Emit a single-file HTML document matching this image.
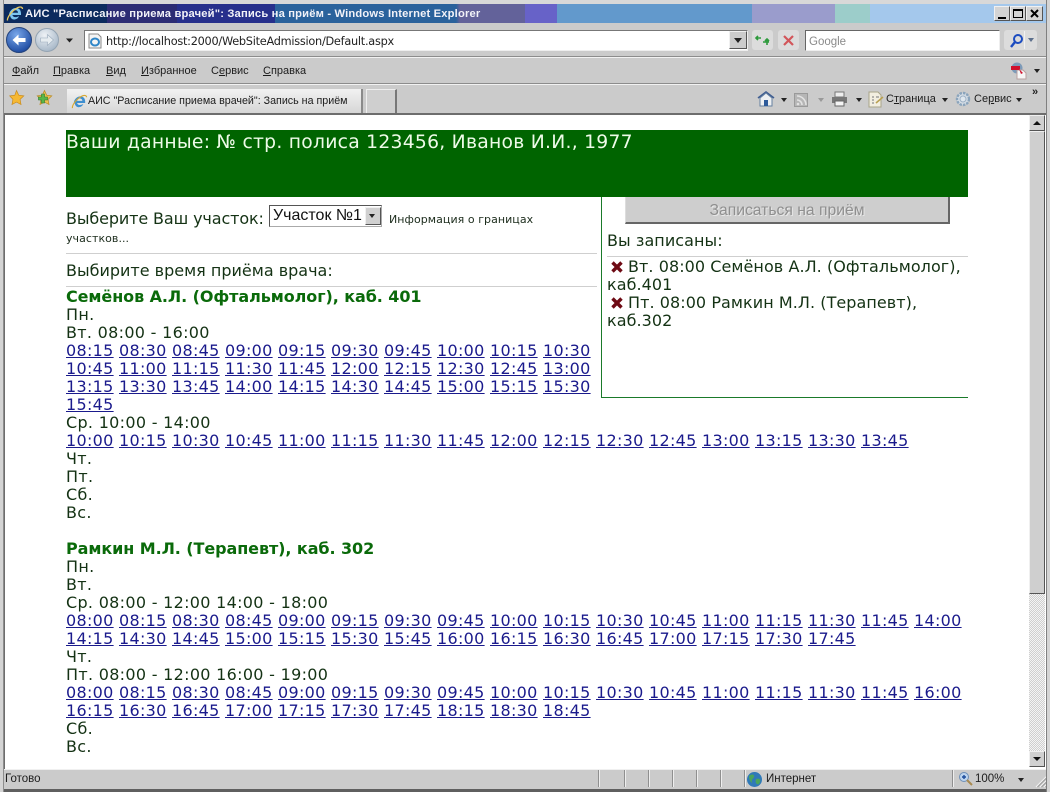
<!DOCTYPE html>
<html lang="ru"><head><meta charset="utf-8"><title>АИС</title>
<style>
html,body{margin:0;padding:0;width:1050px;height:792px;overflow:hidden;background:#cbcbcb}
body{position:relative;font-family:"Liberation Sans",sans-serif}
.a{position:absolute;white-space:nowrap}
.c{font-family:"Liberation Sans",sans-serif;font-size:11px;color:#1c1c1c;line-height:14px}
.d{font-family:"DejaVu Sans",sans-serif;font-size:11px;color:#1c2c1c;line-height:14px;letter-spacing:-.15px}
.v{font-family:"DejaVu Sans",sans-serif;font-size:16px;line-height:18px;letter-spacing:.3px;color:#143214}
.v a{color:#1a1a8c;text-decoration:underline}
.v b{color:#0a6a0a;font-weight:bold;letter-spacing:-.08px}
.t0{letter-spacing:0}
.t1{letter-spacing:.06px}
.ln{position:absolute;background:#cfcfcf;height:1px}
u{text-decoration:underline}
.btn{position:absolute;background:#d4d4d4;border:1px solid;border-color:#f0f0f0 #555 #555 #f0f0f0;box-sizing:border-box}
.sep{position:absolute;height:1px;background:#f2f2f2;left:0;width:1050px;border-top:1px solid #8c8c8c}
.tri{position:absolute;width:0;height:0;border-left:3.5px solid transparent;border-right:3.5px solid transparent;border-top:4px solid #222}
.st{position:absolute;top:770px;height:17px;width:1px;background:#8f8f8f;border-right:1px solid #eee}
</style></head><body>

<!-- title bar -->
<div class="a" style="left:0;top:0;width:1050px;height:4px;background:#d8d8d8"></div>
<div class="a" style="left:4px;top:4px;width:1042px;height:19px;background:linear-gradient(90deg,#0c2b5e 0,#0c2b5e 103px,#2c2c74 103px,#2c2c74 173px,#27308c 173px,#27308c 271px,#2a629c 271px,#2a629c 452px,#63629a 456px,#63629a 521px,#6762c8 521px,#6762c8 553px,#6299cc 553px,#6299cc 748px,#9a9ccc 748px,#9a9ccc 831px,#9ccdca 831px,#9ccdca 866px,#a4c8ec 866px)"></div>
<svg class="a" style="left:6px;top:5px" width="18" height="18" viewBox="0 0 18 18"><path d="M3 10.500C3 6 6.500 3 10 3c3 0 5 2.200 5 5.500v1.500H6.500c.2 2 3.500 3.200 6.500 1-.8 2.500-3 3.500-5 3.500-2 0-3.500-1.500-4-4zM6.500 7.800h5.500c0-1.500-1-2.500-2.700-2.500-1.500 0-2.600 1-2.800 2.500z" fill="#7cc4f0"/><path d="M1.500 15.500C1 13 5 6 12 2.500c2.500-1 4.500-.5 4.500 1.500" fill="none" stroke="#e8c860" stroke-width="1.300"/></svg>
<div class="a" style="left:25px;top:6px;font:bold 11.200px/16px 'Liberation Sans',sans-serif;color:#f2f2f8;letter-spacing:.17px">АИС "Расписание приема врачей": Запись на приём - Windows Internet Explorer</div>
<div class="btn" style="left:994px;top:6px;width:16px;height:15px"></div>
<div class="a" style="left:998px;top:17px;width:8px;height:2px;background:#000"></div>
<div class="btn" style="left:1010px;top:6px;width:16px;height:15px"></div>
<div class="a" style="left:1013px;top:9px;width:10px;height:9px;border:1px solid #000;border-top-width:2px;box-sizing:border-box"></div>
<div class="btn" style="left:1026px;top:6px;width:17px;height:15px"></div>
<svg class="a" style="left:1029px;top:8px" width="11" height="11"><path d="M2 2l7 7M9 2l-7 7" stroke="#000" stroke-width="2"/></svg>

<!-- address bar -->
<svg class="a" style="left:6px;top:26px" width="74" height="28" viewBox="0 0 74 28">
<defs><radialGradient id="bk" cx=".4" cy=".3" r=".8"><stop offset="0" stop-color="#7aa8ea"/><stop offset="1" stop-color="#123f98"/></radialGradient><radialGradient id="fw" cx=".4" cy=".3" r=".8"><stop offset="0" stop-color="#eef2f6"/><stop offset="1" stop-color="#9eb0c2"/></radialGradient></defs>
<circle cx="13" cy="14" r="12.500" fill="url(#bk)" stroke="#24437c"/>
<path d="M6.500 14l6-5.500v3.500h7v4h-7v3.500z" fill="#fff"/>
<circle cx="41" cy="14" r="11.500" fill="url(#fw)" stroke="#93a3b2"/>
<path d="M47.500 14l-6-5.500v3.500h-7v4h7v3.500z" fill="#e6ecf0" stroke="#9ab" stroke-width=".6"/>
<path d="M60 12.500h7l-3.500 4z" fill="#222"/></svg>
<div class="a" style="left:84px;top:30px;width:664px;height:21px;background:#fff;border:1px solid;border-color:#777 #eee #eee #777;box-sizing:border-box"></div>
<svg class="a" style="left:87px;top:33px" width="16" height="16"><path d="M2 1h9l3 3v11H2z" fill="#f4f4f4" stroke="#8a8a8a"/><ellipse cx="8" cy="9" rx="4" ry="3.500" fill="none" stroke="#2f86c8" stroke-width="2"/></svg>
<div class="a" style="left:106px;top:34px;font:11.300px/15px 'DejaVu Sans',sans-serif;color:#222;letter-spacing:-.26px">http://localhost:2000/WebSiteAdmission/Default.aspx</div>
<div class="btn" style="left:729px;top:31px;width:18px;height:18px;background:#ccc"></div>
<div class="tri" style="left:734px;top:38px;border-left-width:4px;border-right-width:4px;border-top-width:5px"></div>
<div class="a" style="left:752px;top:30px;width:21px;height:20px;background:#dcdcdc;border-radius:3px"></div>
<svg class="a" style="left:754px;top:32px" width="18" height="16"><path d="M2 6h5M4 4L2 6l2 2M9 10h6M13 8v5M11 9l2-2 2 2" fill="none" stroke="#2d9a3c" stroke-width="1.600"/></svg>
<div class="a" style="left:778px;top:30px;width:21px;height:20px;background:#dcdcdc;border-radius:3px"></div>
<svg class="a" style="left:782px;top:34px" width="13" height="13"><path d="M2 2l9 9M11 2l-9 9" stroke="#d2555a" stroke-width="2.200"/></svg>
<div class="a" style="left:805px;top:30px;width:195px;height:21px;background:#fff;border:1px solid;border-color:#666 #eee #eee #666;box-sizing:border-box"></div>
<div class="a" style="left:809px;top:35px;font:11.500px/15px 'Liberation Sans',sans-serif;color:#8a8a8a">Google</div>
<div class="a" style="left:1004px;top:30px;width:33px;height:20px;background:#dcdcdc;border-radius:3px"></div>
<svg class="a" style="left:1009px;top:33px" width="16" height="15"><circle cx="9" cy="6" r="4" fill="none" stroke="#1c4cc0" stroke-width="2"/><path d="M6 9l-4 5" stroke="#1c4cc0" stroke-width="2.400"/></svg>
<div class="a" style="left:1024px;top:31px;width:1px;height:18px;background:#f2f2f2"></div>
<div class="tri" style="left:1028px;top:38px;border-top-color:#5c6f8c"></div>

<div class="sep" style="top:56px"></div>
<!-- menu -->
<div class="a c" style="left:12px;top:64px"><u>Ф</u>айл</div>
<div class="a c" style="left:53px;top:64px"><u>П</u>равка</div>
<div class="a c" style="left:106px;top:64px"><u>В</u>ид</div>
<div class="a c" style="left:141px;top:64px"><u>И</u>збранное</div>
<div class="a c" style="left:211px;top:64px">С<u>е</u>рвис</div>
<div class="a c" style="left:263px;top:64px"><u>С</u>правка</div>
<svg class="a" style="left:1009px;top:62px" width="20" height="18"><circle cx="8" cy="6" r="5.500" fill="#7d9ab8"/><path d="M8 8h6l3 3v6H8z" fill="#f6f6f6" stroke="#b9a0a0"/><path d="M2 4h9v4H2zM10 7l2 5 2-1" fill="#d0102c"/></svg>
<div class="tri" style="left:1034px;top:69px"></div>
<div class="sep" style="top:83px"></div>

<!-- tab row -->
<svg class="a" style="left:8px;top:89px" width="46" height="18" viewBox="0 0 46 18">
<path d="M8.500 1.500l2.200 4.700 5.100.7-3.700 3.500.9 5.100-4.500-2.400-4.500 2.400.9-5.100L1.700 6.900l5.100-.7z" fill="#f6b832" stroke="#c88a1c" stroke-width=".7"/>
<path d="M36.500 1.500l2.200 4.700 5.100.7-3.700 3.500.9 5.100-4.500-2.400-4.500 2.400.9-5.100-3.700-3.500 5.100-.7z" fill="#eec050" stroke="#b88a20" stroke-width=".7"/>
<path d="M33.500 5h3v3h3v3h-3v3h-3v-3h-3V8h3z" fill="#58b848" stroke="#2e7a2e" stroke-width=".6"/></svg>
<div class="a" style="left:67px;top:89px;width:296px;height:24px;background:linear-gradient(#f2f2f2,#d6d6d6);border-right:2px solid #8a8a8a;box-sizing:border-box"></div>
<svg class="a" style="left:71px;top:93px" width="17" height="18" viewBox="0 0 18 18"><path d="M3 10.500C3 6 6.500 3 10 3c3 0 5 2.200 5 5.500v1.500H6.500c.2 2 3.500 3.200 6.500 1-.8 2.500-3 3.500-5 3.500-2 0-3.500-1.500-4-4zM6.500 7.800h5.500c0-1.500-1-2.500-2.700-2.500-1.500 0-2.600 1-2.800 2.500z" fill="#3f8fd0"/><path d="M1.500 15.500C1 13 5 6 12 2.500c2.500-1 4.500-.5 4.500 1.500" fill="none" stroke="#d8a830" stroke-width="1.200"/></svg>
<div class="a c" style="left:88px;top:94px;font-size:10.700px">АИС "Расписание приема врачей": Запись на приём</div>
<div class="a" style="left:366px;top:89px;width:28px;height:24px;border-top:1px solid #eee;border-left:1px solid #eee;border-right:2px solid #777;background:#cfcfcf"></div>
<svg class="a" style="left:757px;top:90px" width="18" height="18"><path d="M1 8l8-6 8 6" fill="none" stroke="#3e5c90" stroke-width="1.600"/><path d="M3 8v8h12V8L9 3z" fill="#eef0f2" stroke="#6680a0"/><path d="M7 10h4v6H7z" fill="#2d5a9a"/></svg>
<div class="tri" style="left:781px;top:98px"></div>
<div class="a" style="left:794px;top:93px;width:14px;height:14px;background:#b6b6b6;border:1px solid #9a9a9a;box-sizing:border-box"></div>
<svg class="a" style="left:796px;top:95px" width="11" height="11"><path d="M1 5a5 5 0 0 1 5 5M1 1a9 9 0 0 1 9 9" fill="none" stroke="#e2e2e2" stroke-width="1.600"/><circle cx="2" cy="9" r="1.300" fill="#e2e2e2"/></svg>
<div class="tri" style="left:818px;top:98px;border-top-color:#999"></div>
<svg class="a" style="left:831px;top:90px" width="18" height="18"><path d="M4 2h9v5H4z" fill="#eee" stroke="#777"/><path d="M1 7h15v6H1z" fill="#777"/><path d="M4 11h9v5H4z" fill="#f4f4f4" stroke="#666"/></svg>
<div class="tri" style="left:856px;top:98px"></div>
<svg class="a" style="left:867px;top:90px" width="18" height="18"><path d="M2 2h9l3 3v12H2z" fill="#f2eee0" stroke="#a8a488"/><path d="M5 7h2M5 10h2M5 13h2M9 7h3" stroke="#777"/><path d="M9 13l7-6" stroke="#b9a050" stroke-width="1.500"/></svg>
<div class="a c" style="left:886px;top:92px"><span>С</span><u>т</u>раница</div>
<div class="tri" style="left:942px;top:98px"></div>
<svg class="a" style="left:954px;top:90px" width="18" height="18"><circle cx="9" cy="9" r="6" fill="#d6dee6" stroke="#8aa4bc" stroke-width="2.400" stroke-dasharray="2.500 1"/><circle cx="9" cy="9" r="3" fill="#dfe7ee" stroke="#9cb0c4"/></svg>
<div class="a c" style="left:974px;top:92px">Се<u>р</u>вис</div>
<div class="tri" style="left:1016px;top:98px"></div>
<div class="a" style="left:1032px;top:85px;font:bold 11px/14px 'Liberation Sans',sans-serif;color:#222">»</div>

<!-- viewport -->
<div class="a" style="left:4px;top:113px;width:1042px;height:656px;background:#fff;border-top:2px solid #6d6d6d;border-left:1px solid #6d6d6d;box-sizing:border-box"></div>
<!-- scrollbar -->
<div class="a" style="left:1029px;top:115px;width:16px;height:652px;background:repeating-conic-gradient(#cfcfcf 0 25%,#f4f4f4 0 50%) 0 0/2px 2px"></div>
<div class="btn" style="left:1029px;top:115px;width:16px;height:16px;background:#d0d0d0"></div>
<div class="a" style="left:1033px;top:121px;width:0;height:0;border-left:4px solid transparent;border-right:4px solid transparent;border-bottom:4px solid #111"></div>
<div class="btn" style="left:1029px;top:131px;width:16px;height:463px;background:#cfcfcf"></div>
<div class="btn" style="left:1029px;top:751px;width:16px;height:16px;background:#d0d0d0"></div>
<div class="tri" style="left:1033px;top:757px;border-left-width:4px;border-right-width:4px;border-top-width:4px;border-top-color:#111"></div>

<!-- page content -->
<div class="a" style="left:66px;top:130px;width:902px;height:67px;background:#006400"></div>
<div class="a v" style="left:66px;top:132px;font-size:18.750px;line-height:22px;color:#eefbe8;letter-spacing:.25px">Ваши данные: № стр. полиса 123456, Иванов И.И., 1977</div>

<div class="a" style="left:601px;top:197px;width:1px;height:201px;background:#1a7a2a"></div>
<div class="a" style="left:601px;top:397px;width:367px;height:1px;background:#1a7a2a"></div>

<div class="a v t0" style="left:66px;top:210px;letter-spacing:-.12px">Выберите Ваш участок:</div>
<div class="a" style="left:269px;top:205px;width:113px;height:22px;border:1px solid;border-color:#555 #aaa #aaa #555;box-sizing:border-box;background:#fff;font:16px/20px 'Liberation Sans',sans-serif;color:#111;padding-left:3px">Участок №1</div>
<div class="btn" style="left:365px;top:207px;width:16px;height:18px;background:#d0d0d0"></div>
<div class="tri" style="left:369px;top:214px"></div>
<div class="a d" style="left:389px;top:213px;letter-spacing:.05px">Информация о границах</div>
<div class="a d" style="left:66px;top:232px;letter-spacing:.05px">участков...</div>
<div class="ln" style="left:66px;top:253px;width:531px"></div>
<div class="a v t0" style="left:66px;top:262px">Выбирите время приёма врача:</div>
<div class="ln" style="left:66px;top:286px;width:531px"></div>

<div class="a v" style="left:66px;top:288px"><b>Семёнов А.Л. (Офтальмолог), каб. 401</b><br>
Пн.<br>
Вт. 08:00 - 16:00<br>
<a>08:15</a> <a>08:30</a> <a>08:45</a> <a>09:00</a> <a>09:15</a> <a>09:30</a> <a>09:45</a> <a>10:00</a> <a>10:15</a> <a>10:30</a><br>
<a>10:45</a> <a>11:00</a> <a>11:15</a> <a>11:30</a> <a>11:45</a> <a>12:00</a> <a>12:15</a> <a>12:30</a> <a>12:45</a> <a>13:00</a><br>
<a>13:15</a> <a>13:30</a> <a>13:45</a> <a>14:00</a> <a>14:15</a> <a>14:30</a> <a>14:45</a> <a>15:00</a> <a>15:15</a> <a>15:30</a><br>
<a>15:45</a><br>
Ср. 10:00 - 14:00<br>
<a>10:00</a> <a>10:15</a> <a>10:30</a> <a>10:45</a> <a>11:00</a> <a>11:15</a> <a>11:30</a> <a>11:45</a> <a>12:00</a> <a>12:15</a> <a>12:30</a> <a>12:45</a> <a>13:00</a> <a>13:15</a> <a>13:30</a> <a>13:45</a><br>
Чт.<br>
Пт.<br>
Сб.<br>
Вс.<br>
<br>
<b>Рамкин М.Л. (Терапевт), каб. 302</b><br>
Пн.<br>
Вт.<br>
Ср. 08:00 - 12:00 14:00 - 18:00<br>
<a>08:00</a> <a>08:15</a> <a>08:30</a> <a>08:45</a> <a>09:00</a> <a>09:15</a> <a>09:30</a> <a>09:45</a> <a>10:00</a> <a>10:15</a> <a>10:30</a> <a>10:45</a> <a>11:00</a> <a>11:15</a> <a>11:30</a> <a>11:45</a> <a>14:00</a><br>
<a>14:15</a> <a>14:30</a> <a>14:45</a> <a>15:00</a> <a>15:15</a> <a>15:30</a> <a>15:45</a> <a>16:00</a> <a>16:15</a> <a>16:30</a> <a>16:45</a> <a>17:00</a> <a>17:15</a> <a>17:30</a> <a>17:45</a><br>
Чт.<br>
Пт. 08:00 - 12:00 16:00 - 19:00<br>
<a>08:00</a> <a>08:15</a> <a>08:30</a> <a>08:45</a> <a>09:00</a> <a>09:15</a> <a>09:30</a> <a>09:45</a> <a>10:00</a> <a>10:15</a> <a>10:30</a> <a>10:45</a> <a>11:00</a> <a>11:15</a> <a>11:30</a> <a>11:45</a> <a>16:00</a><br>
<a>16:15</a> <a>16:30</a> <a>16:45</a> <a>17:00</a> <a>17:15</a> <a>17:30</a> <a>17:45</a> <a>18:15</a> <a>18:30</a> <a>18:45</a><br>
Сб.<br>
Вс.</div>

<!-- right panel -->
<div class="a" style="left:625px;top:197px;width:325px;height:27px;background:#cecece;border-right:2px solid #666;border-bottom:2px solid #666;border-left:1px solid #ddd;box-sizing:border-box;text-align:center;font:15.700px/27px 'Liberation Sans',sans-serif;color:#8f8f8f;text-shadow:1px 1px 0 #e8e8e8">Записаться на приём</div>
<div class="a v t1" style="left:607px;top:232px">Вы записаны:</div>
<div class="ln" style="left:607px;top:256px;width:361px"></div>
<svg class="a" style="left:610px;top:260px" width="14" height="14"><path d="M2.500 2.500l9 9M11.500 2.500l-9 9" stroke="#6e0a14" stroke-width="3.400"/></svg>
<div class="a v t1" style="left:628px;top:258px">Вт. 08:00 Семёнов А.Л. (Офтальмолог),</div>
<div class="a v t1" style="left:607px;top:276px">каб.401</div>
<svg class="a" style="left:610px;top:296px" width="14" height="14"><path d="M2.500 2.500l9 9M11.500 2.500l-9 9" stroke="#6e0a14" stroke-width="3.400"/></svg>
<div class="a v t1" style="left:628px;top:294px">Пт. 08:00 Рамкин М.Л. (Терапевт),</div>
<div class="a v t1" style="left:607px;top:312px">каб.302</div>

<!-- status bar -->
<div class="a" style="left:4px;top:769px;width:1042px;height:1px;background:#f0f0f0"></div>
<div class="a c" style="left:5px;top:772px;font-size:11.500px">Готово</div>
<div class="st" style="left:598px"></div><div class="st" style="left:624px"></div><div class="st" style="left:648px"></div><div class="st" style="left:672px"></div><div class="st" style="left:696px"></div><div class="st" style="left:720px"></div><div class="st" style="left:744px"></div>
<svg class="a" style="left:746px;top:771px" width="17" height="17"><circle cx="8.500" cy="8.500" r="7.500" fill="#2f79b8"/><path d="M3 5c3-3 6-1 5 1S5 9 6 11s-3 0-3-6zM10 8c3-1 5 0 4 3s-3 3-4 1 0-3 0-4z" fill="#4aa45c"/></svg>
<div class="a c" style="left:766px;top:772px;font-size:11.500px">Интернет</div>
<div class="st" style="left:952px"></div>
<svg class="a" style="left:958px;top:771px" width="15" height="16"><circle cx="6" cy="6" r="4.500" fill="#bcd4ee" stroke="#6d8fb8"/><path d="M4 6h4M6 4v4" stroke="#1c4c9c" stroke-width="1.400"/><path d="M9 9l5 5" stroke="#a88a50" stroke-width="2"/></svg>
<div class="a c" style="left:975px;top:772px;font-size:11.500px">100%</div>
<div class="tri" style="left:1018px;top:778px"></div>
<svg class="a" style="left:1034px;top:774px" width="14" height="14"><path d="M13 2L2 13M13 6l-7 7M13 10l-3 3" stroke="#f2f2f2" stroke-width="1.200"/><path d="M13 3.500L3.500 13M13 7.500L7.500 13M13 11.500L11.500 13" stroke="#999"/></svg>
<div class="a" style="left:0;top:789px;width:1050px;height:3px;background:#5f5f5f"></div>
<div class="a" style="left:0;top:0;width:3px;height:792px;background:#d4d4d4;border-right:1px solid #8d8d8d"></div>
<div class="a" style="left:1046px;top:0;width:4px;height:792px;background:#d4d4d4;border-left:1px solid #808080;box-sizing:border-box"></div>
</body></html>
